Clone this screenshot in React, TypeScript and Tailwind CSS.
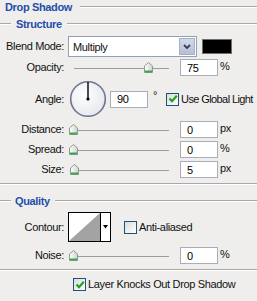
import React from "react";

const Etched = ({ className = "" }: { className?: string }) => (
  <div className={"flex flex-col " + className}>
    <div className="h-px bg-[#a9a8a6]" />
    <div className="h-px bg-white" />
  </div>
);

const Thumb = () => (
  <svg width="9" height="11" viewBox="0 0 9 11">
    <defs>
      <linearGradient id="tg" x1="0" y1="0" x2="1" y2="0">
        <stop offset="0" stopColor="#ffffff" />
        <stop offset="1" stopColor="#cfd3cf" />
      </linearGradient>
    </defs>
    <path d="M0.5 10.5 V4 L4.5 0.5 L8.5 4 V10.5 Z" fill="url(#tg)" stroke="#8c9a8e" strokeWidth="1" />
    <rect x="1" y="8.5" width="7" height="2" fill="#3aa84e" />
  </svg>
);

const Slider = ({ pos }: { pos: number }) => (
  <div className="relative w-[104px] h-[17px]">
    <div className="absolute left-[5px] right-[4px] top-[9px] h-px bg-[#9b9b9b]" />
    <div className="absolute top-[3px]" style={{ left: pos }}>
      <Thumb />
    </div>
  </div>
);

const Input = ({ value }: { value: string }) => (
  <div className="w-[38px] h-[17px] bg-white border border-[#a7aeb8] flex items-center pl-[6px] pt-[1px] text-black">{value}</div>
);

const Check = ({ checked }: { checked: boolean }) => (
  <div className="w-[13px] h-[13px] shrink-0 border border-[#1c5180] bg-gradient-to-br from-[#dcdcd6] to-white flex items-center justify-center">
    {checked && (
      <svg width="10" height="10" viewBox="0 0 10 10">
        <path d="M1.5 4.6 L4 7.2 L8.8 1.8" fill="none" stroke="#21a121" strokeWidth="2.2" />
      </svg>
    )}
  </div>
);

const Label = ({ children }: { children: React.ReactNode }) => (
  <div className="w-[64px] text-right shrink-0">{children}</div>
);

const Unit = ({ children }: { children: React.ReactNode }) => (
  <div className="ml-[2px] -mt-[3px]">{children}</div>
);

const SliderRow = ({ label, pos, value, unit, mt = "mt-[3px]" }: { label: string; pos: number; value: string; unit: string; mt?: string }) => (
  <div className={"flex items-center h-[17px] " + mt}>
    <Label>{label}</Label>
    <div className="ml-[5px]">
      <Slider pos={pos} />
    </div>
    <div className="ml-[7px]">
      <Input value={value} />
    </div>
    <Unit>{unit}</Unit>
  </div>
);

export default function App() {
  return (
    <div
      className="w-[257px] h-[301px] bg-[#efeeec] overflow-hidden text-[11px] tracking-[-0.35px] text-[#111] leading-none whitespace-nowrap"
      style={{ fontFamily: '"Liberation Sans", Arial, sans-serif' }}
    >
      {/* Drop Shadow header */}
      <div className="flex items-center h-[14px]">
        <span className="ml-[5px] font-bold text-[#1f4eab]">Drop Shadow</span>
        <Etched className="flex-1 ml-[8px]" />
      </div>
      {/* Structure */}
      <div className="flex items-center h-[14px] mt-[3px]">
        <Etched className="w-[11px]" />
        <span className="ml-[5px] font-bold text-[#1f4eab]">Structure</span>
        <Etched className="flex-1 ml-[5px]" />
      </div>
      {/* Blend Mode */}
      <div className="flex items-center h-[21px] mt-[5px]">
        <Label>Blend Mode:</Label>
        <div className="ml-[4px] w-[129px] h-[21px] bg-white border border-[#8ea2bd] flex items-center">
          <span className="pl-[4px] flex-1 pt-[2px]">Multiply</span>
          <div className="w-[16px] h-[17px] mr-[1px] bg-gradient-to-b from-[#d4d9e6] to-[#b6bfd3] border border-[#a5afc6] flex items-center justify-center">
            <svg width="8" height="6" viewBox="0 0 8 6">
              <path d="M1 1 L4 4 L7 1" fill="none" stroke="#33405a" strokeWidth="1.8" />
            </svg>
          </div>
        </div>
        <div className="ml-[5px] w-[30px] h-[15px] bg-black border border-[#6f6f6f]" />
      </div>
      {/* Opacity */}
      <SliderRow label="Opacity:" pos={75} value="75" unit="%" mt="mt-[2px]" />
      {/* Angle */}
      <div className="flex items-center h-[38px] mt-[4px]">
        <Label>Angle:</Label>
        <div className="ml-[5px]">
          <svg width="38" height="38" viewBox="0 0 38 38">
            <defs>
              <radialGradient id="cg" cx="0.4" cy="0.4" r="0.7">
                <stop offset="0" stopColor="#ffffff" />
                <stop offset="1" stopColor="#e4e6ea" />
              </radialGradient>
            </defs>
            <circle cx="19" cy="19" r="17.3" fill="url(#cg)" stroke="#6f7593" strokeWidth="1.6" />
            <line x1="19" y1="2" x2="19" y2="19" stroke="#000" strokeWidth="1.4" />
            <circle cx="19" cy="19" r="1.6" fill="#000" />
          </svg>
        </div>
        <div className="ml-[3px]">
          <Input value="90" />
        </div>
        <div className="ml-[5px] -mt-[8px]">°</div>
        <div className="ml-[9px]">
          <Check checked />
        </div>
        <span className="ml-[2px] tracking-[-0.6px]">Use Global Light</span>
      </div>
      <SliderRow label="Distance:" pos={0} value="0" unit="px" />
      <SliderRow label="Spread:" pos={0} value="0" unit="%" />
      <SliderRow label="Size:" pos={1} value="5" unit="px" />
      <Etched className="mt-[5px]" />
      {/* Quality */}
      <div className="flex items-center h-[14px] mt-[9px]">
        <Etched className="w-[11px]" />
        <span className="ml-[4px] font-bold text-[#1f4eab]">Quality</span>
        <Etched className="flex-1 ml-[5px]" />
      </div>
      {/* Contour */}
      <div className="flex items-center h-[30px] mt-[4px]">
        <Label>Contour:</Label>
        <div className="ml-[4px] w-[43px] h-[30px] border border-black flex bg-white">
          <svg width="31" height="28" viewBox="0 0 31 28" className="shrink-0">
            <rect x="0" y="0" width="31" height="28" fill="#ffffff" />
            <polygon points="0,28 31,0 31,28" fill="#a3a3a3" />
          </svg>
          <div className="w-px bg-black" />
          <div className="flex-1 flex items-center justify-center">
            <svg width="5" height="4" viewBox="0 0 5 4">
              <polygon points="0,0 5,0 2.5,3.5" fill="#000" />
            </svg>
          </div>
        </div>
        <div className="ml-[13px]">
          <Check checked={false} />
        </div>
        <span className="ml-[2px]">Anti-aliased</span>
      </div>
      {/* Noise */}
      <SliderRow label="Noise:" pos={0} value="0" unit="%" mt="mt-[5px]" />
      <Etched className="mt-[5px]" />
      <div className="flex items-center h-[13px] mt-[7px] pl-[73px]">
        <Check checked />
        <span className="ml-[2px]">Layer Knocks Out Drop Shadow</span>
      </div>
    </div>
  );
}
